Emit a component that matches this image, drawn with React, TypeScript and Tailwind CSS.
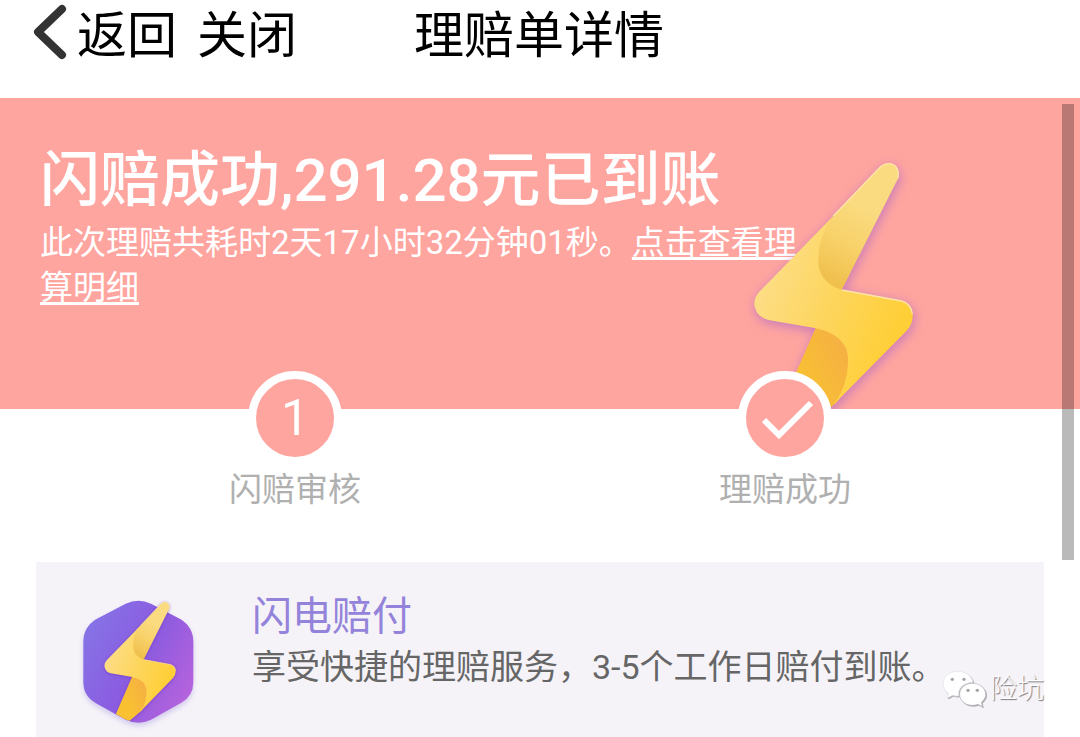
import React from "react";

type Step = {
    label: string;
    done: boolean;
};

const steps: Step[] = [
    { label: "闪赔审核", done: false },
    { label: "理赔成功", done: true },
];

// Shared by the hero picture and the small badge
const BoltShape = ({ id }: { id: string }) => (
    <g>
        <defs>
            <linearGradient id={`${id}-top`} x1="430" y1="200" x2="320" y2="420" gradientUnits="userSpaceOnUse">
                <stop offset="0" stopColor="#fadb80" />
                <stop offset="0.5" stopColor="#f8d169" />
                <stop offset="1" stopColor="#f0bf4c" />
            </linearGradient>
            <linearGradient id={`${id}-bottom`} x1="390" y1="640" x2="230" y2="720" gradientUnits="userSpaceOnUse">
                <stop offset="0" stopColor="#f5b043" />
                <stop offset="1" stopColor="#f9c132" />
            </linearGradient>
            <linearGradient id={`${id}-front`} x1="130" y1="440" x2="520" y2="600" gradientUnits="userSpaceOnUse">
                <stop offset="0" stopColor="#fddd84" />
                <stop offset="0.5" stopColor="#fdd55c" />
                <stop offset="1" stopColor="#ffcf38" />
            </linearGradient>
        </defs>
        <path
            d="M480 82 Q500 64 522 75 Q542 89 533 118 L365 450 Q260 480 270 330 L320 250 Z"
            fill={`url(#${id}-top)`}
        />
        <path
            d="M288 562 L158 856 Q140 900 160 915 Q182 930 210 905 L352 785 L420 640 L400 562 Z"
            fill={`url(#${id}-bottom)`}
        />
        <path
            d="M340 228 L118 455 Q99 475 104 500 Q112 532 145 540 L288 565 Q376 584 384 650 Q386 735 340 795 L560 572 Q580 550 578 522 Q574 492 545 483 L365 450 Q300 428 295 370 Q293 290 340 228 Z"
            fill={`url(#${id}-front)`}
        />
        <path
            d="M365 450 L545 483 Q574 492 577 522 M340 228 L480 82 Q500 64 522 75 Q540 88 533 116"
            fill="none"
            stroke="#ffe6a6"
            strokeWidth="4"
            strokeLinejoin="round"
        />
    </g>
);

const BoltBadge = () => (
    <svg viewBox="150 130 411 429" className="h-[143px] w-[137px] shrink-0" aria-hidden="true">
        <defs>
            <linearGradient id="hex" x1="200" y1="250" x2="520" y2="420" gradientUnits="userSpaceOnUse">
                <stop offset="0" stopColor="#8672e6" />
                <stop offset="0.5" stopColor="#8b5be0" />
                <stop offset="1" stopColor="#b563dc" />
            </linearGradient>
            <clipPath id="badge-clip">
                <path d="M150 130 H561 V430 L520 430 Q518 455 490 470 L395 514 Q355 530 315 512 L190 440 L150 430 Z" />
            </clipPath>
        </defs>
        <path
            d="M317 165 Q355 148 393 165 L482 212 Q520 236 520 280 V400 Q520 442 484 462 L393 513 Q355 531 317 513 L228 464 Q190 442 190 400 V280 Q190 236 228 212 Z"
            fill="url(#hex)"
            className="drop-shadow-[0_10px_8px_rgba(150,130,220,0.35)]"
        />
        <g clipPath="url(#badge-clip)">
            <g transform="translate(207 128) scale(0.45 0.455)" className="drop-shadow-[0_4px_12px_rgba(90,40,180,0.5)]">
                <BoltShape id="small" />
            </g>
        </g>
    </svg>
);

const WechatIcon = () => (
    <svg viewBox="0 0 132 114" className="h-[38px] w-11 drop-shadow-[1px_1px_0_#a9a7ad]" aria-hidden="true">
        <path
            d="M46 4 C22 4 3 20 3 41 C3 53 9 63 19 70 L16 84 L32 76 Q40 79 50 78 C47 54 66 38 93 37 C89 17 70 4 46 4 Z"
            fill="#fff"
            stroke="#e2e0e6"
            strokeWidth="2"
        />
        <path
            d="M91 40 C69 40 53 54 53 73 C53 92 70 106 91 106 Q100 106 108 103 L121 110 L118 97 C126 91 131 83 131 73 C131 54 113 40 91 40 Z"
            fill="#fff"
            stroke="#b5b3b9"
            strokeWidth="2"
        />
        <g fill="#a5a3a9">
            <circle cx="31" cy="28" r="5" />
            <circle cx="66" cy="28" r="5" />
            <circle cx="78" cy="61" r="5" />
            <circle cx="106" cy="61" r="5" />
        </g>
    </svg>
);

const App = () => {
    return (
        <div className="relative flex min-h-screen flex-col overflow-hidden bg-white font-[Roboto,'Noto_Sans_CJK_SC',sans-serif]">
            <header className="flex h-[98px] items-start pl-8 text-[50px] leading-[72px] text-black">
                <button type="button" className="flex items-start">
                    <svg viewBox="0 0 45 64" className="h-16 w-[45px]" aria-hidden="true">
                        <path d="M30 9 L6 32 L30 55" fill="none" stroke="#333" strokeWidth="8" strokeLinecap="round" strokeLinejoin="round" />
                    </svg>
                    返回
                </button>
                <button type="button" className="ml-5">关闭</button>
                <h1 className="ml-[117px]">理赔单详情</h1>
            </header>

            <section className="relative h-[311px] bg-[#ffa59f] pt-11 pl-10 text-white">
                <div className="max-w-[776px]">
                    <h2 className="text-[60px] leading-[78px] font-medium whitespace-nowrap">闪赔成功,291.28元已到账</h2>
                    <p className="text-[33px] leading-[45px]">
                        此次理赔共耗时2天17小时32分钟01秒。
                        <a href="#detail" className="underline decoration-[3px] underline-offset-[3px]">点击查看理算明细</a>
                    </p>
                </div>
                <div className="absolute right-[140px] bottom-0 h-[269px] w-[220px] overflow-hidden">
                    <svg viewBox="0 0 660 840" className="h-[280px] w-[220px] drop-shadow-[1px_3px_6px_rgba(160,90,210,0.6)]" aria-hidden="true">
                        <BoltShape id="large" />
                    </svg>
                </div>
            </section>

            <ol className="relative -mt-[38px] grid grid-cols-2 px-[50px]">
                {steps.map((step, i) => (
                    <li key={step.label} className="flex flex-col items-center">
                        <div className="flex size-[94px] items-center justify-center rounded-full border-8 border-white bg-[#ffa59f] text-[50px] leading-none text-white">
                            {step.done ? (
                                <svg viewBox="0 0 78 78" className="size-[78px]" aria-label="完成">
                                    <path d="M18 41 L33 56 L65 24" fill="none" stroke="#fff" strokeWidth="6" />
                                </svg>
                            ) : (
                                <span>{i + 1}</span>
                            )}
                        </div>
                        <span className="text-[33px] leading-[50px] text-[#b0b0b0]">{step.label}</span>
                    </li>
                ))}
            </ol>

            <section id="detail" className="relative mx-9 mt-[47px] flex flex-1 items-start bg-[#f5f3f8] pt-[30px] pl-[34px]">
                <BoltBadge />
                <div className="ml-[45px]">
                    <h3 className="text-[40px] leading-[50px] text-[#9483da]">闪电赔付</h3>
                    <p className="text-[34px] leading-[50px] whitespace-nowrap text-[#666]">享受快捷的理赔服务，3-5个工作日赔付到账。</p>
                </div>
                <div className="absolute right-0 bottom-7 flex items-center gap-1">
                    <WechatIcon />
                    <span className="text-[27px] leading-10 font-light text-white [text-shadow:1px_1px_1px_#77757b]">险坑</span>
                </div>
            </section>

            <div className="absolute top-[104px] right-[6px] h-[456px] w-3 bg-black/27" />
        </div>
    );
};

export default App;
